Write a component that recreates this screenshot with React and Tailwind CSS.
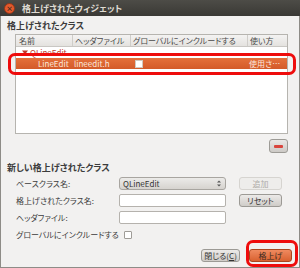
import React from "react";

const jp = "[font-family:'Noto_Sans_CJK_JP','Noto_Sans',sans-serif] [font-feature-settings:'palt']";

const Btn = ({ className = "", children }) => (
  <div
    className={`h-[13px] flex items-center justify-center whitespace-nowrap rounded-[3px] border text-[8px] leading-none ${className}`}
  >
    {children}
  </div>
);

const PromotedWidgets = () => {
  return (
    <div className={`${jp} relative w-[300px] h-[268px] overflow-hidden bg-[#f2f1f0] text-[#3c3c3c]`}>
      {/* title bar */}
      <div className="h-[16px] flex items-center bg-gradient-to-b from-[#4d4c47] to-[#3a3935]">
        <div className="ml-[4px] w-[11px] h-[11px] rounded-full bg-[#e45a2c] border border-[#8f3519] flex items-center justify-center">
          <span className="text-[7px] leading-none font-bold text-[#3a2a22]">×</span>
        </div>
        <span className="ml-[7px] text-[9px] leading-none font-bold text-[#dfdbd2]">格上げされたウィジェット</span>
      </div>

      <div className="h-[252px] border-x border-b border-[#8e8c87] px-[6px] flex flex-col">
        {/* existing promoted classes */}
        <div className="mt-[4px] h-[12px] flex items-center text-[9px] font-bold text-[#3c3c3c]">
          格上げされたクラス
        </div>

        <div className="mt-[2px] ml-[8px] mr-[5px] h-[100px] bg-white border border-[#b6b4af] flex flex-col">
          <div className="h-[12px] flex whitespace-nowrap text-[8px] leading-none bg-gradient-to-b from-[#f4f3f2] to-[#e4e2df] border-b border-[#c9c7c3] text-[#4a4a4a]">
            <div className="w-[57px] pl-[3px] flex items-center border-r border-[#cfcdc9]">名前</div>
            <div className="w-[58px] pl-[2px] flex items-center border-r border-[#cfcdc9]">ヘッダファイル</div>
            <div className="w-[117px] pl-[2px] flex items-center border-r border-[#cfcdc9]">グローバルにインクルードする</div>
            <div className="flex-1 pl-[2px] flex items-center">使い方</div>
          </div>
          <div className="h-[11px] flex items-center pl-[6px] text-[8px] leading-none text-[#c0392b]">
            <svg width="6" height="5" viewBox="0 0 6 5" className="mr-[2px]">
              <path d="M0 0.5 H6 L3 4.5 Z" fill="#c0392b" />
            </svg>
            <span>QLineEdit</span>
          </div>
          <div className="h-[11px] flex items-center whitespace-nowrap bg-gradient-to-b from-[#e4703b] to-[#d45a29] text-[8px] leading-none text-[#fbe9df]">
            <div className="w-[57px] pl-[22px]">LineEdit</div>
            <div className="w-[61px] pl-[1px]">lineedit.h</div>
            <div className="w-[114px] pl-[1px]">
              <div className="w-[8px] h-[8px] bg-white border border-[#d0c8c0]" />
            </div>
            <div className="flex-1 pl-[1px]">使用さ…</div>
          </div>
        </div>

        {/* remove button */}
        <div className="mt-[5px] mr-[5px] flex justify-end">
          <div className="w-[19px] h-[14px] rounded-[3px] border border-[#9d9b96] bg-gradient-to-b from-[#e9e8e6] to-[#cdcac6] flex items-center justify-center">
            <div className="w-[9px] h-[3px] rounded-[1px] bg-[#d9453d]" />
          </div>
        </div>

        {/* new promoted class */}
        <div className="mt-[9px] h-[12px] flex items-center text-[9px] font-bold text-[#3c3c3c]">
          新しい格上げされたクラス
        </div>

        <div className="mt-[3px] flex items-center h-[13px]">
          <div className="w-[112px] pl-[9px] text-[8px] leading-none whitespace-nowrap">ベースクラス名:</div>
          <div className="w-[107px] h-[13px] rounded-[3px] border border-[#a8a5a0] bg-gradient-to-b from-[#ecebe9] to-[#d6d3cf] flex items-center justify-between pl-[3px] pr-[4px]">
            <span className="text-[8px] leading-none text-[#333]">QLineEdit</span>
            <svg width="4" height="7" viewBox="0 0 4 7">
              <path d="M0 2.5 L2 0.5 L4 2.5 Z M0 4.5 L2 6.5 L4 4.5 Z" fill="#555" />
            </svg>
          </div>
          <Btn className="ml-[13px] w-[43px] border-[#d6d4d0] bg-[#eeedeb] text-[#aeaca8]">追加</Btn>
        </div>

        <div className="mt-[4px] flex items-center h-[13px]">
          <div className="w-[112px] pl-[9px] text-[8px] leading-none whitespace-nowrap">格上げされたクラス名:</div>
          <div className="w-[107px] h-[13px] rounded-[2px] border border-[#b5b2ad] bg-white" />
          <Btn className="ml-[13px] w-[43px] border-[#9c9a95] bg-gradient-to-b from-[#eceae8] to-[#cfccc8] text-[#333]">
            リセット
          </Btn>
        </div>

        <div className="mt-[4px] flex items-center h-[13px]">
          <div className="w-[112px] pl-[9px] text-[8px] leading-none whitespace-nowrap">ヘッダファイル:</div>
          <div className="w-[107px] h-[13px] rounded-[2px] border border-[#b5b2ad] bg-white" />
        </div>

        <div className="mt-[5px] flex items-center h-[11px]">
          <div className="pl-[9px] text-[8px] leading-none whitespace-nowrap">グローバルにインクルードする</div>
          <div className="ml-[5px] w-[8px] h-[8px] rounded-[1px] border border-[#9f9c97] bg-white" />
        </div>

        {/* dialog buttons */}
        <div className="mt-[9px] flex justify-end pr-[1px]">
          <Btn className="w-[39px] border-[#9c9a95] bg-gradient-to-b from-[#eceae8] to-[#cfccc8] text-[#333]">
            閉じる(<span className="underline">C</span>)
          </Btn>
          <Btn className="ml-[9px] w-[43px] border-[#a9461f] bg-gradient-to-b from-[#ef8a5f] to-[#d9612f] text-[#3a2a22]">
            格上げ
          </Btn>
        </div>
      </div>

      {/* red annotations */}
      <div className="absolute left-[8px] top-[53px] w-[288px] h-[22px] rounded-[7px] border-[3px] border-[#ee0c0c]" />
      <div className="absolute left-[246px] top-[240px] w-[52px] h-[27px] rounded-[7px] border-[3px] border-[#ee0c0c]" />
    </div>
  );
};

export default function App() {
  return <PromotedWidgets />;
}
